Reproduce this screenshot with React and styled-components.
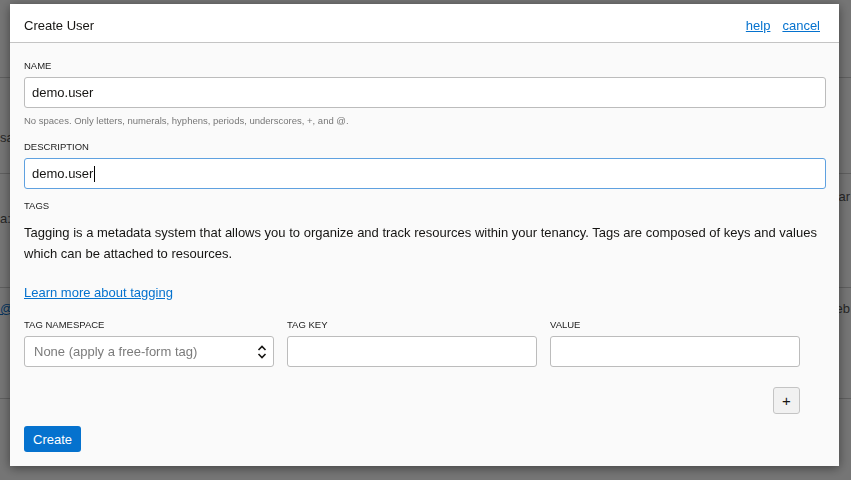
import React from "react";
import styled, { createGlobalStyle } from "styled-components";

const Global = createGlobalStyle`
  html, body { margin: 0; padding: 0; }
  body {
    width: 851px; height: 480px; overflow: hidden;
    font-family: "Liberation Sans", Arial, sans-serif;
    background: #fff;
  }
  * { box-sizing: border-box; }
`;

/* ---------- underlying page ---------- */
const Page = styled.div`
  width: 851px;
  height: 480px;
  padding-top: 77px;
  display: flex;
  flex-direction: column;
`;

const PageRow = styled.div`
  height: ${(p) => p.$h}px;
  flex-shrink: 0;
  border-top: 1px solid #cfcfcf;
  display: flex;
  justify-content: space-between;
  align-items: flex-start;
  padding: ${(p) => p.$pt}px 1px 0 0;
  font-size: 13px;
  color: #555;
`;

const PageCell = styled.span`
  display: block;
  margin-top: ${(p) => p.$mt || 0}px;
  color: ${(p) => (p.$link ? "#0572ce" : "#555")};
  text-decoration: ${(p) => (p.$link ? "underline" : "none")};
  white-space: nowrap;
`;

const Overlay = styled.div`
  position: fixed;
  inset: 0;
  background: rgba(0, 0, 0, 0.54);
`;

/* ---------- dialog ---------- */
const Dialog = styled.div`
  position: fixed;
  left: 10px;
  top: 4px;
  width: 829px;
  background: #fafafa;
  box-shadow: 0 2px 10px rgba(0, 0, 0, 0.45);
  display: flex;
  flex-direction: column;
  color: #161513;
`;

const Header = styled.div`
  height: 39px;
  flex-shrink: 0;
  background: #fff;
  border-bottom: 1px solid #c4c4c4;
  display: flex;
  align-items: center;
  justify-content: space-between;
  padding: 5px 19px 0 14px;
`;

const Title = styled.h1`
  margin: 0;
  font-size: 13px;
  font-weight: normal;
  color: #161513;
`;

const HeaderLinks = styled.div`
  display: flex;
  gap: 12px;
`;

const Link = styled.a`
  color: #0572ce;
  text-decoration: underline;
  font-size: 13px;
  cursor: pointer;
`;

const Body = styled.div`
  padding: 17px 13px 14px 14px;
  display: flex;
  flex-direction: column;
`;

const Label = styled.label`
  display: block;
  font-size: 9.5px;
  line-height: 12px;
  text-transform: uppercase;
  color: #222;
  margin-top: ${(p) => p.$mt || 0}px;
  margin-bottom: 5px;
`;

const TextInput = styled.input`
  display: block;
  width: 100%;
  height: 31px;
  border: 1px solid #bcbcbc;
  border-radius: 3px;
  background: #fff;
  padding: 0 7px;
  font-family: inherit;
  font-size: 13px;
  color: #161513;
  outline: none;
`;

const FocusedField = styled.div`
  height: 31px;
  border: 1px solid #5fa1e0;
  border-radius: 3px;
  background: #fff;
  padding: 0 7px;
  font-size: 13px;
  display: flex;
  align-items: center;
  color: #161513;
`;

const Caret = styled.span`
  display: inline-block;
  width: 1px;
  height: 16px;
  background: #000;
  margin-left: 1px;
`;

const Hint = styled.div`
  margin-top: 7px;
  font-size: 9.5px;
  line-height: 12px;
  color: #777;
`;

const Paragraph = styled.p`
  margin: 5px 0 0;
  font-size: 13px;
  line-height: 21px;
  color: #161513;
`;

const LearnLink = styled(Link)`
  display: block;
  margin-top: 18px;
  line-height: 21px;
  align-self: flex-start;
`;

const TagRow = styled.div`
  display: grid;
  grid-template-columns: repeat(3, 250px);
  column-gap: 13px;
  margin-top: 16px;
`;

const TagCol = styled.div`
  display: flex;
  flex-direction: column;
`;

const Select = styled.div`
  height: 31px;
  border: 1px solid #bcbcbc;
  border-radius: 3px;
  background: #fff;
  padding: 0 5px 0 9px;
  display: flex;
  align-items: center;
  justify-content: space-between;
  font-size: 13px;
  color: #7b7b7b;
`;

const PlusRow = styled.div`
  width: 776px;
  display: flex;
  justify-content: flex-end;
  margin-top: 20px;
`;

const PlusButton = styled.button`
  width: 27px;
  height: 27px;
  padding: 0 0 1px;
  border: 1px solid #c4c4c4;
  border-radius: 3px;
  background: #f1f1f1;
  font-family: inherit;
  font-size: 15px;
  font-weight: normal;
  color: #161513;
  display: flex;
  align-items: center;
  justify-content: center;
`;

const Footer = styled.div`
  margin-top: 12px;
`;

const PrimaryButton = styled.button`
  height: 26px;
  padding: 0 9px;
  border: none;
  border-radius: 3px;
  background: #0572ce;
  color: #fff;
  font-family: inherit;
  font-size: 13px;
`;

const Chevrons = () => (
  <svg width="12" height="16" viewBox="0 0 12 16" fill="none" stroke="#161513" strokeWidth="1.6">
    <path d="M2.5 6 L6 2.5 L9.5 6" />
    <path d="M2.5 10 L6 13.5 L9.5 10" />
  </svg>
);

export default function App() {
  return (
    <>
      <Global />
      <Page>
        <PageRow $h={96} $pt={52}>
          <PageCell>sa</PageCell>
          <PageCell />
        </PageRow>
        <PageRow $h={114} $pt={14}>
          <PageCell $mt={23}>a:</PageCell>
          <PageCell $mt={1}>ar</PageCell>
        </PageRow>
        <PageRow $h={111} $pt={13}>
          <PageCell $link>@c</PageCell>
          <PageCell>eb</PageCell>
        </PageRow>
        <PageRow $h={82} $pt={0} />
      </Page>
      <Overlay />
      <Dialog role="dialog" aria-label="Create User">
        <Header>
          <Title>Create User</Title>
          <HeaderLinks>
            <Link>help</Link>
            <Link>cancel</Link>
          </HeaderLinks>
        </Header>
        <Body>
          <Label>Name</Label>
          <TextInput defaultValue="demo.user" readOnly />
          <Hint>No spaces. Only letters, numerals, hyphens, periods, underscores, +, and @.</Hint>

          <Label $mt={14}>Description</Label>
          <FocusedField>
            demo.user<Caret />
          </FocusedField>

          <Label $mt={11}>Tags</Label>
          <Paragraph>
            Tagging is a metadata system that allows you to organize and track resources within your tenancy. Tags are composed of keys and values which can be attached to resources.
          </Paragraph>
          <LearnLink>Learn more about tagging</LearnLink>

          <TagRow>
            <TagCol>
              <Label>Tag Namespace</Label>
              <Select>
                <span>None (apply a free-form tag)</span>
                <Chevrons />
              </Select>
            </TagCol>
            <TagCol>
              <Label>Tag Key</Label>
              <TextInput readOnly />
            </TagCol>
            <TagCol>
              <Label>Value</Label>
              <TextInput readOnly />
            </TagCol>
          </TagRow>

          <PlusRow>
            <PlusButton>+</PlusButton>
          </PlusRow>

          <Footer>
            <PrimaryButton>Create</PrimaryButton>
          </Footer>
        </Body>
      </Dialog>
    </>
  );
}
